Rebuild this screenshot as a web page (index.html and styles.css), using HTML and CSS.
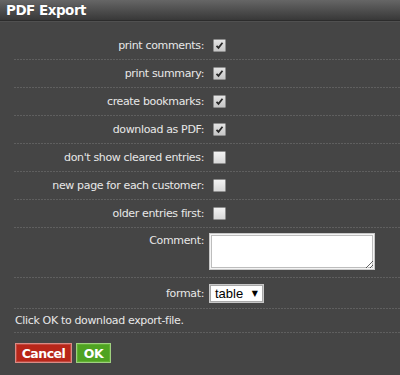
FILE: index.html
```html
<!DOCTYPE html>
<html>
<head>
<meta charset="utf-8">
<link rel="stylesheet" href="styles.css">
</head>
<body>
<div class="titlebar"><h1 class="title">PDF Export</h1></div>
<form class="form">
  <div class="row">
    <label class="lbl">print comments:</label>
    <div class="field"><span class="cb on"><svg viewBox="0 0 11 11" width="11" height="11"><path d="M2.5 5.8 L4.5 7.8 L8.5 2.8" fill="none" stroke="#2a2a2a" stroke-width="1.8"/></svg></span></div>
  </div>
  <div class="row">
    <label class="lbl">print summary:</label>
    <div class="field"><span class="cb on"><svg viewBox="0 0 11 11" width="11" height="11"><path d="M2.5 5.8 L4.5 7.8 L8.5 2.8" fill="none" stroke="#2a2a2a" stroke-width="1.8"/></svg></span></div>
  </div>
  <div class="row">
    <label class="lbl">create bookmarks:</label>
    <div class="field"><span class="cb on"><svg viewBox="0 0 11 11" width="11" height="11"><path d="M2.5 5.8 L4.5 7.8 L8.5 2.8" fill="none" stroke="#2a2a2a" stroke-width="1.8"/></svg></span></div>
  </div>
  <div class="row">
    <label class="lbl">download as PDF:</label>
    <div class="field"><span class="cb on"><svg viewBox="0 0 11 11" width="11" height="11"><path d="M2.5 5.8 L4.5 7.8 L8.5 2.8" fill="none" stroke="#2a2a2a" stroke-width="1.8"/></svg></span></div>
  </div>
  <div class="row">
    <label class="lbl">don't show cleared entries:</label>
    <div class="field"><span class="cb"></span></div>
  </div>
  <div class="row">
    <label class="lbl">new page for each customer:</label>
    <div class="field"><span class="cb"></span></div>
  </div>
  <div class="row">
    <label class="lbl">older entries first:</label>
    <div class="field"><span class="cb"></span></div>
  </div>
  <div class="row row-top">
    <label class="lbl">Comment:</label>
    <div class="field"><textarea class="comment"></textarea></div>
  </div>
  <div class="row row-format">
    <label class="lbl">format:</label>
    <div class="field"><span class="select"><span class="select-val">table</span><span class="select-arrow">▼</span></span></div>
  </div>
  <div class="note">Click OK to download export-file.</div>
  <div class="buttons">
    <button type="button" class="btn btn-cancel">Cancel</button>
    <button type="button" class="btn btn-ok">OK</button>
  </div>
</form>
</body>
</html>
```

FILE: styles.css
```css
html, body {
  margin: 0;
  padding: 0;
}
body {
  background: #454545;
  color: #e8e8e8;
  font-family: "DejaVu Sans", Verdana, sans-serif;
  font-size: 11px;
  letter-spacing: -0.35px;
  width: 400px;
  height: 375px;
  overflow: hidden;
}
.titlebar {
  height: 20px;
  background: linear-gradient(#666666, #4a4a4a 60%, #383838);
  border-bottom: 1px solid #2c2c2c;
  box-shadow: 0 1px 0 #505050;
  display: flex;
  align-items: center;
  padding-left: 6px;
}
.title {
  margin: 0;
  font-size: 13.5px;
  letter-spacing: -0.5px;
  font-weight: bold;
  color: #ffffff;
  text-shadow: 0 0 1px #333;
}
.form {
  padding: 11px 0 0 14px;
  margin: 0;
}
.row {
  display: grid;
  grid-template-columns: 190px 1fr;
  column-gap: 5px;
  align-items: center;
  height: 27px;
  padding-bottom: 1px;
  background-image: repeating-linear-gradient(90deg, #5f5f5f 0 2px, transparent 2px 3px);
  background-size: 100% 1px;
  background-position: left bottom;
  background-repeat: no-repeat;
}
.lbl {
  text-align: right;
  line-height: 13px;
  white-space: nowrap;
}
.field {
  display: flex;
  align-items: center;
}
.cb {
  width: 11px;
  height: 11px;
  margin-left: 4px;
  border: 1px solid #8e8e8e;
  border-radius: 1px;
  background: linear-gradient(#f2f2f2, #d8d8d8);
  display: inline-flex;
  align-items: center;
  justify-content: center;
}
.cb.on {
  background: linear-gradient(#e4e4e4, #c6c6c6);
}
.row-top {
  height: auto;
  align-items: start;
  padding: 5px 0 8px;
}
.row-top .lbl {
  padding-top: 1px;
}
.comment {
  width: 166px;
  height: 37px;
  box-sizing: border-box;
  margin: 0;
  border: 1px solid #c8c8c8;
  box-shadow: inset 0 0 0 1px #f4f4f4, inset 0 0 0 2px #bdbdbd;
  background: #ffffff;
  resize: both;
  padding: 2px;
}
.row-format {
  height: 30px;
}
.select {
  width: 55px;
  height: 19px;
  box-sizing: border-box;
  background: #ffffff;
  border: 1px solid #c8c8c8;
  box-shadow: inset 0 0 0 1px #a8a8a8;
  display: flex;
  align-items: center;
  justify-content: space-between;
  padding: 0 5px 0 5px;
  color: #000;
  font-family: "Liberation Sans", Arial, sans-serif;
  font-size: 13px;
  letter-spacing: 0;
}
.select-arrow {
  font-size: 8px;
  font-family: "DejaVu Sans", sans-serif;
}
.note {
  height: 23px;
  line-height: 23px;
  padding-bottom: 1px;
  padding-left: 1px;
  background-image: repeating-linear-gradient(90deg, #5f5f5f 0 2px, transparent 2px 3px);
  background-size: 100% 1px;
  background-position: left bottom;
  background-repeat: no-repeat;
}
.buttons {
  display: flex;
  gap: 4px;
  margin-top: 10px;
  padding-left: 1px;
}
.btn {
  height: 20px;
  margin: 0;
  padding: 0 4px;
  font-family: "DejaVu Sans", Verdana, sans-serif;
  font-weight: bold;
  font-size: 12.5px;
  letter-spacing: -0.5px;
  color: #ffffff;
  cursor: pointer;
}
.btn-cancel {
  width: 57px;
  background: #b82619;
  border: 1px solid #d98a84;
  box-shadow: inset 0 0 0 1px #c4483e;
}
.btn-ok {
  width: 35px;
  background: #4fa321;
  border: 1px solid #9fd07f;
  box-shadow: inset 0 0 0 1px #62b133;
}
```
